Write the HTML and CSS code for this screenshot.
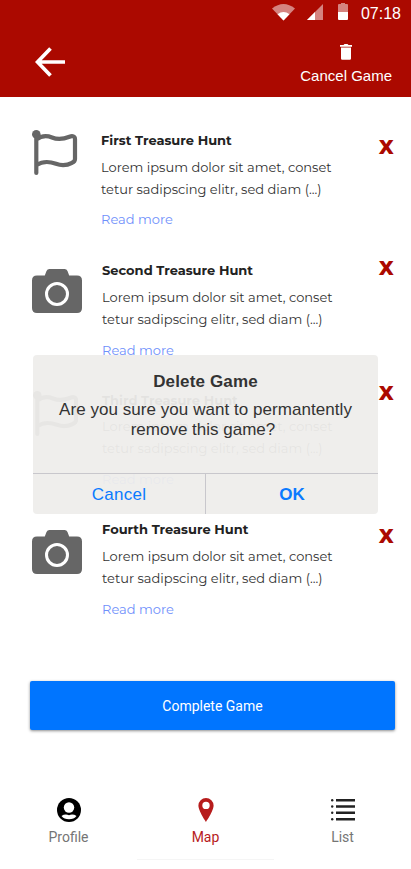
FILE: index.html
```html
<!DOCTYPE html>
<html lang="en">
<head>
<meta charset="utf-8">
<title>Treasure Hunts</title>
<link rel="stylesheet" href="styles.css">
</head>
<body>
<svg class="defs" width="0" height="0">
  <symbol id="flag" viewBox="0 0 46 46"><circle cx="4.3" cy="4.3" r="4.3"/><path d="M4.3 5V43M4.300 9.500C9 6 15 5.500 20 7.500C27 10.500 32 9 37.500 6.700C40.500 5.500 43 6.300 43 9V29C43 31 42 32 40 32.800C34 36 30 36 24 33.800C17 31.200 10 31.500 4.500 35" fill="none" stroke="#666" stroke-width="4.2" stroke-linecap="round" stroke-linejoin="round"/></symbol>
  <symbol id="camera" viewBox="0 0 50 44"><path d="M5 6.500H12.800L14.500 2Q15.300 0 17.500 0H32.500Q34.700 0 35.500 2L37.200 6.500H45Q50 6.500 50 11.500V39Q50 44 45 44H5Q0 44 0 39V11.500Q0 6.500 5 6.500Z"/><circle cx="25" cy="25" r="10.500" fill="none" stroke="#fff" stroke-width="3"/></symbol>
</svg>
<div class="screen">
  <header class="header">
    <div class="status">
      <svg class="wifi" width="23" height="17" viewBox="0 0 23 17"><path d="M0 4.500Q11.500-4.500 23 4.500L11.500 16.500Z" opacity=".5"/><path d="M5.500 10.200Q11.500 6 17.500 10.200L11.500 16.500Z"/></svg>
      <svg class="signal" width="16" height="16" viewBox="0 0 16 16"><path d="M0 16L16 0V16Z" opacity=".5"/><path d="M0 16L8 8V16Z"/></svg>
      <svg class="battery" width="10" height="17" viewBox="0 0 10 17"><path d="M0 2Q0 1 1 1H3V0H7V1H9Q10 1 10 2V9H0Z" opacity=".5"/><path d="M0 9H10V16Q10 17 9 17H1Q0 17 0 16Z"/></svg>
      <span class="time">07:18</span>
    </div>
    <div class="toolbar">
      <svg class="back" width="30" height="30" viewBox="0 0 30 30"><path d="M15.500 1.500L2.500 15L15.500 28.500M2.500 15H30" fill="none" stroke="#fff" stroke-width="3.700"/></svg>
      <div class="cancel-game">
        <svg width="12" height="16" viewBox="0 0 12 16"><path d="M0 1H3.500L4.500 0H7.500L8.500 1H12V2.700H0ZM1 3.500H11V14.500Q11 15.700 9.800 15.700H2.200Q1 15.700 1 14.500Z"/></svg>
        <span>Cancel Game</span>
      </div>
    </div>
  </header>
  <main class="list">
    <article class="hunt first">
      <svg class="flag"><use href="#flag"/></svg>
      <div class="body"><h2>First Treasure Hunt</h2><p>Lorem ipsum dolor sit amet, conset<br>tetur sadipscing elitr, sed diam (...)</p><a>Read more</a></div>
      <b class="remove">x</b>
    </article>
    <article class="hunt second">
      <svg class="camera"><use href="#camera"/></svg>
      <div class="body"><h2>Second Treasure Hunt</h2><p>Lorem ipsum dolor sit amet, conset<br>tetur sadipscing elitr, sed diam (...)</p><a>Read more</a></div>
      <b class="remove">x</b>
    </article>
    <article class="hunt third">
      <svg class="flag"><use href="#flag"/></svg>
      <div class="body"><h2>Third Treasure Hunt</h2><p>Lorem ipsum dolor sit amet, conset<br>tetur sadipscing elitr, sed diam (...)</p><a>Read more</a></div>
      <b class="remove">x</b>
    </article>
    <article class="hunt fourth">
      <svg class="camera"><use href="#camera"/></svg>
      <div class="body"><h2>Fourth Treasure Hunt</h2><p>Lorem ipsum dolor sit amet, conset<br>tetur sadipscing elitr, sed diam (...)</p><a>Read more</a></div>
      <b class="remove">x</b>
    </article>
  </main>
  <button class="complete">Complete Game</button>
  <nav class="nav">
    <div class="tab"><svg width="24" height="24" viewBox="0 0 24 24"><circle cx="12" cy="12" r="12"/><circle cx="12" cy="9.500" r="5.200" fill="#fff"/><path d="M4.500 18Q8 15.700 12 17.200Q16 15.700 19.500 18Q17 21.200 12 21.200Q7 21.200 4.500 18Z" fill="#fff"/></svg><span>Profile</span></div>
    <div class="tab active"><svg width="24" height="24" viewBox="0 0 24 24"><path fill-rule="evenodd" d="M12 0A7.600 7.600 0 0 0 4.400 7.600C4.400 13 12 24 12 24S19.600 13 19.600 7.600A7.600 7.600 0 0 0 12 0ZM12 3.700A3.700 3.700 0 1 1 12 11.100A3.700 3.700 0 0 1 12 3.700Z"/></svg><span>Map</span></div>
    <div class="tab"><svg width="24" height="24" viewBox="0 0 24 24"><path d="M5 1H24V3.500H5ZM5 7.300H24V9.800H5ZM5 13.600H24V16.100H5ZM5 20H24V22.500H5Z" fill="#222"/><g fill="#222"><circle cx="1.200" cy="2.200" r="1.200"/><circle cx="1.200" cy="8.500" r="1.200"/><circle cx="1.200" cy="14.800" r="1.200"/><circle cx="1.200" cy="21.200" r="1.200"/></g></svg><span>List</span></div>
  </nav>
  <section class="dialog" role="dialog">
    <div class="message"><h3>Delete Game</h3><p>Are you sure you want to permantently<br><span>remove this game?</span></p></div>
    <div class="actions"><button class="cancel">Cancel</button><button class="ok">OK</button></div>
  </section>
</div>
</body>
</html>
```
FILE: styles.css
```css
* { box-sizing: border-box; margin: 0; padding: 0; }
body { background: #fff; font-family: "Liberation Sans", sans-serif; }
button { border: 0; background: none; font: inherit; }
.defs { display: block; height: 0; }
.screen { position: relative; width: 411px; height: 869px; overflow: hidden; display: flex; flex-direction: column; }
.header { height: 97px; background: #ab0900; color: #fff; fill: #fff; }
.status { height: 27px; display: flex; justify-content: flex-end; padding: 3px 10px 0 0; }
.wifi { margin-top: 1px; }
.signal { margin: 1px 15px 0 12px; }
.time { font-size: 16px; line-height: 20px; margin-left: 13px; padding-top: 1px; }
.toolbar { display: flex; justify-content: space-between; padding: 17px 19px 0 35px; }
.back { margin-top: 3px; }
.cancel-game { display: flex; flex-direction: column; align-items: center; font-size: 15px; line-height: 20px; gap: 6px; }
.list { padding-top: 33px; height: 584px; }
.hunt { display: flex; height: 130px; padding: 0 17px 0 32px; font-family: Montserrat, "Noto Sans", sans-serif; }
.third { height: 129px; }
.flag, .camera { flex: none; fill: #666; }
.flag { width: 46px; height: 46px; margin-right: 23px; }
.third .flag { margin: 1px 23px 0 1px; }
.camera { width: 50px; height: 44px; margin: 9px 20px 0 0; }
.fourth .camera { margin-top: 11px; }
.body { flex: 1; white-space: nowrap; }
.body h2 { font-size: 13px; line-height: 20px; color: #222; }
.body p { font-size: 13px; line-height: 22px; color: #333; margin-top: 6px; }
.body a { display: block; font-size: 13px; line-height: 20px; color: #6f8ffb; margin-top: 10px; }
.first a { margin-top: 9px; }
.third p { margin-top: 5px; }
.remove { font: bold 24px/24px "DejaVu Sans", sans-serif; color: #ab0900; height: 24px; margin-top: 4px; }
.second .remove { margin-top: -5px; }
.third .remove { margin-top: -10px; }
.complete { width: 365px; height: 49px; margin-left: 30px; border-radius: 2px; background: #0075ff; color: #fff; font: 14px Roboto, sans-serif; box-shadow: 0 1px 3px rgba(0,0,0,.45); }
.nav { display: flex; margin-top: 54px; height: 76px; }
.tab { flex: 1; display: flex; flex-direction: column; align-items: center; padding-top: 14px; font: 14px/20px Roboto, sans-serif; color: #757575; gap: 5px; }
.tab svg { fill: #000; }
.active { color: #b71c1c; border-bottom: 1px solid #f5f5f5; }
.active svg { fill: #b71c1c; }
.dialog { position: absolute; left: 33px; top: 355px; width: 345px; height: 159px; border-radius: 4px; background: rgba(238,237,235,.95); color: #333; text-align: center; display: flex; flex-direction: column; }
.message { height: 118px; padding-top: 17px; font-size: 17px; line-height: 20px; }
.message h3 { font-size: 17px; line-height: 20px; letter-spacing: .15px; margin-bottom: 8px; }
.message p { letter-spacing: .05px; }
.message p span { margin-right: 5px; letter-spacing: 0; }
.actions { flex: 1; display: flex; border-top: 1px solid #c8c7cc; }
.actions button { flex: 1; color: #0a7aff; font-size: 17px; padding-top: 2px; }
.actions .cancel { letter-spacing: .3px; }
.actions .ok { border-left: 1px solid #c8c7cc; font-weight: bold; }
```
